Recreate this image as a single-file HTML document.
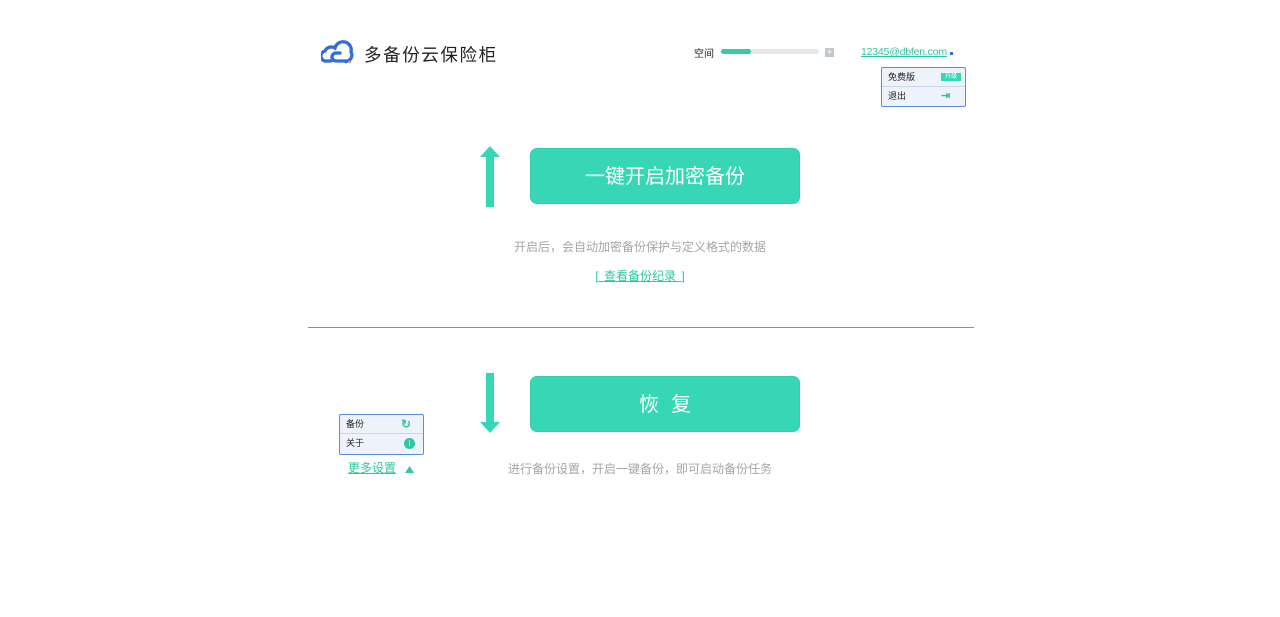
<!DOCTYPE html>
<html><head><meta charset="utf-8"><style>
*{margin:0;padding:0;box-sizing:border-box}
body{width:1280px;height:617px;background:#fff;position:relative;font-family:"Liberation Sans","Noto Sans CJK SC",sans-serif;overflow:hidden}
.a{position:absolute}
.btn{position:absolute;left:530px;width:270px;height:56px;background:#37d7b6;border:1px solid #2fcfae;border-radius:7px;color:#fff;font-size:20px;text-align:center;line-height:56px}
.gray{color:#a6a6a6;font-size:12px;text-align:center;width:1280px;left:0}
.menu{position:absolute;background:#eef3fb;border:1px solid #5a8de0;border-radius:2px;font-size:9px;color:#222}
.menu div{height:19px;line-height:19px;padding-left:6px;position:relative}
</style></head><body>
<svg class="a" style="left:321px;top:40px" width="34" height="26" viewBox="0 0 34 26"><path d="M10 21 H6 A5 5 0 0 1 4 11 A7 7 0 0 1 14 8 A8 8 0 0 1 30 12 A6 6 0 0 1 26 21 H15 A4 4 0 0 1 15 13 H19" fill="none" stroke="#2f6fd6" stroke-width="3.3" stroke-linecap="round"/><circle cx="25" cy="22" r="1.4" fill="#2f6fd6"/><circle cx="29" cy="22" r="1.4" fill="#f39a1e"/></svg>
<div class="a" style="left:364px;top:42px;font-size:17.5px;color:#222;letter-spacing:1.6px">多备份云保险柜</div>
<div class="a" style="left:694px;top:45px;font-size:10px;color:#222">空间</div>
<div class="a" style="left:721px;top:49px;width:98px;height:5px;background:#e4e9ee;border-radius:3px"></div>
<div class="a" style="left:721px;top:49px;width:30px;height:5px;background:#2ecfa8;border-radius:3px"></div>
<div class="a" style="left:825px;top:48px;width:9px;height:9px;background:#c3c8cc;color:#fff;font-size:9px;line-height:9px;text-align:center">+</div>
<div class="a" style="left:861px;top:46px;font-size:10.5px;color:#2ec7a2;text-decoration:underline;letter-spacing:-0.2px">12345@dbfen.com</div>
<div class="a" style="left:950px;top:52px;width:3px;height:3px;background:#2f6fd6"></div>
<div class="menu" style="left:881px;top:67px;width:85px;height:40px">
<div style="border-bottom:1px solid #c9d7ee">免费版<span class="a" style="right:4px;top:5px;background:#37d7b6;color:#fff;font-size:6px;line-height:8px;padding:0 4px">升级</span></div>
<div>退出<span class="a" style="left:59px;top:0;color:#2ec7a2;font-size:11px;font-weight:bold">⇥</span></div>
</div>
<svg class="a" style="left:479px;top:146px" width="22" height="62"><polygon points="11,0 21,11 15,11 15,61 7,61 7,11 1,11" fill="#37d7b6"/></svg>
<div class="btn" style="top:148px">一键开启加密备份</div>
<div class="a gray" style="top:238px;">开启后，会自动加密备份保护与定义格式的数据</div>
<div class="a" style="left:0;width:1280px;text-align:center;top:267px;font-size:12px;color:#2ec7a2;text-decoration:underline;word-spacing:2px">[ 查看备份纪录 ]</div>
<div class="a" style="left:308px;top:327px;width:666px;height:1px;background:#4aa3e8"></div>
<svg class="a" style="left:479px;top:373px" width="22" height="61"><polygon points="7,0 15,0 15,49 21,49 11,60 1,49 7,49" fill="#37d7b6"/></svg>
<div class="btn" style="top:376px;letter-spacing:12px;padding-left:12px">恢复</div>
<div class="a gray" style="top:460px;">进行备份设置，开启一键备份，即可启动备份任务</div>
<div class="menu" style="left:339px;top:414px;width:85px;height:41px">
<div style="border-bottom:1px solid #c9d7ee">备份<span class="a" style="left:61px;top:0;color:#2ec7a2;font-size:12px;font-weight:bold">↻</span></div>
<div>关于<span class="a" style="left:64px;top:4px;width:11px;height:11px;border-radius:50%;background:#2ec7a2;color:#fff;font-size:8px;line-height:11px;text-align:center">i</span></div>
</div>
<div class="a" style="left:348px;top:459px;font-size:12px;color:#2ec7a2;text-decoration:underline">更多设置</div>
<svg class="a" style="left:405px;top:466px" width="9" height="7"><polygon points="4.5,0 9,7 0,7" fill="#2ec7a2"/></svg>
</body></html>
